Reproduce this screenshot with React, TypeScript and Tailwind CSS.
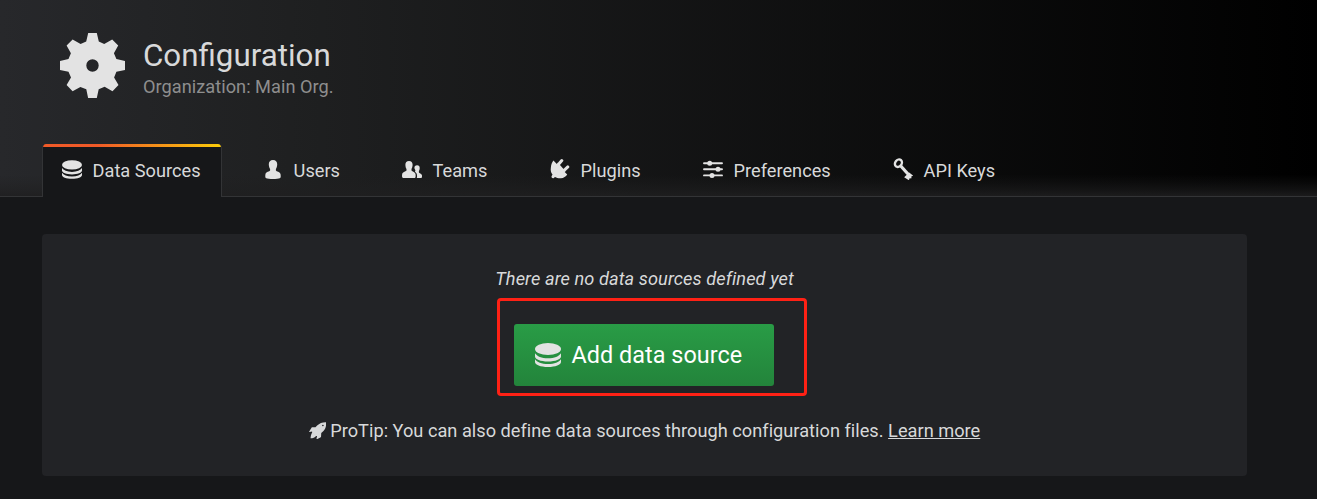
import type { ReactNode } from "react";

type IconProps = { className?: string };

function GearIcon({ className }: IconProps) {
  return (
    <svg viewBox="0 0 65 65" className={className} fill="currentColor">
      <path
        fillRule="evenodd"
        d="M28.2 0h8.6l2 8.6 5.4 2.3 8-4.3 6 6-4.3 7.7 2.5 5.8 8.6 2v8.8l-8.6 1.8-2.3 5.9 4.4 7.4-6 6.3-7.9-4.5-5.9 2.5-1.9 8.700h-8.700l-1.800-8.700-5.900-2.400-7.800 4.400-6-6.300 4.400-7.500-2.500-5.800L0 36.900v-8.800l8.500-2 2.400-5.800-4.300-7.700 6-6 8 4.300 5.600-2.300zM32.500 26.300a6.200 6.200 0 1 0 0 12.400 6.200 6.200 0 0 0 0-12.400z"
      />
    </svg>
  );
}

function DatabaseIcon({ className }: IconProps) {
  return (
    <svg viewBox="0 0 26 24" className={className} fill="currentColor">
      <ellipse cx="13" cy="6" rx="13" ry="6" />
      <path d="M0 10.2c2 3 6.5 5 13 5s11-2 13-5v3.2c0 2.8-5.5 5-13 5s-13-2.2-13-5z" />
      <path d="M0 16.3c2 2.8 6.5 4.8 13 4.8s11-2 13-4.8V19c0 2.8-5.5 5-13 5S0 21.800 0 19z" />
    </svg>
  );
}

function UserIcon({ className }: IconProps) {
  return (
    <svg viewBox="0 0 16 19" className={className} fill="currentColor">
      <path d="M8 0c2.800 0 4.300 1.800 4.200 4.600-.1 2.300-.7 3.400-1.300 4.500v1.500c.3.900 4.400 1.300 4.700 4 .2 1.900.3 3-.9 3.700-1.600.9-11.800.9-13.400 0-1.200-.7-1.100-1.800-.9-3.700.3-2.700 4.400-3.100 4.700-4V9.100C4.500 8 3.900 6.900 3.800 4.600 3.700 1.800 5.200 0 8 0z" />
    </svg>
  );
}

function TeamIcon({ className }: IconProps) {
  return (
    <svg viewBox="0 0 20 17" className={className} fill="currentColor">
      <path d="M7 0c2.500 0 3.700 1.600 3.600 4-.1 2-.6 3-1.100 4v1.500c.3.800 3.600 1.400 4 3.500.3 1.600.3 4-1.100 4H1.200C-.2 17-.1 14.600.2 13c.4-2.100 4-2.700 4.300-3.500V8c-.6-1-1-2-1.100-4C3.300 1.600 4.500 0 7 0z" />
      <path d="M15.100 4.200c1.800 0 2.700 1.200 2.600 3-.1 1.500-.4 2.200-.8 2.900v1.300c.2.700 2.700 1 3 2.700.2 1.300.2 2.900-.9 2.900h-4.200c.4-1.500.3-3.400-.2-4.600-.4-.8-1.200-1.400-1.700-1.700l.4-.6v-1.200c-.5-.7-.8-1.400-.9-2 0-1.700.9-2.700 2.700-2.700z" />
    </svg>
  );
}

function PlugIcon({ className }: IconProps) {
  return (
    <svg viewBox="0 0 20 20" className={className} fill="currentColor">
      <path d="M3.400 1.600 17.200 15.500c-1.300 2.200-3.600 3.500-6.200 3.800-2.200.2-4.400-.4-6-1.400l-1.200 1c-1.200.9-3-.8-2.100-2l.8-1.400C.8 13.700.4 11.300.9 8.300c.3-2.600 1.100-4.900 2.500-6.700z" />
      <path d="M7 3.600 9.500 5.500 14 10.500 15.500 13 10 11z" />
      <path d="m8.200 5.800 3.600-4.200M13.600 11.800l4.200-3.900" fill="none" stroke="currentColor" strokeWidth="3" strokeLinecap="round" />
    </svg>
  );
}

function SlidersIcon({ className }: IconProps) {
  return (
    <svg viewBox="0 0 20 19" className={className} fill="currentColor">
      <path d="M1 3.200h18M1 9.300h18M1 15.400h18" stroke="currentColor" strokeWidth="1.900" strokeLinecap="round" />
      <circle cx="6.700" cy="3.200" r="2.500" />
      <circle cx="15" cy="9.300" r="2.500" />
      <circle cx="9" cy="15.400" r="2.500" />
    </svg>
  );
}

function KeyIcon({ className }: IconProps) {
  return (
    <svg viewBox="0 0 20 22" className={className} fill="none" stroke="currentColor">
      <ellipse cx="5.400" cy="5.200" rx="3.200" ry="4" transform="rotate(38 5.400 5.200)" strokeWidth="2.400" />
      <path d="m7.800 8 8.300 9.200" strokeWidth="3.200" />
      <path d="m12.600 19.200 3.600-3.600 2.300 1.800-1.200.5.200 1.600-1.800.1-.3 1.300z" fill="currentColor" strokeWidth="1.800" />
    </svg>
  );
}

function RocketIcon({ className }: IconProps) {
  return (
    <svg viewBox="0 0 17 17" className={className} fill="currentColor">
      <path
        fillRule="evenodd"
        d="M16.600.2c.3 3.800-.5 6.700-2.800 8.900l-1.900 1.700-.2 3.500c0 .2-.1.300-.3.400l-3.500 2c-.4.200-.7-.1-.6-.5l.5-2.700H6.100L3 10.400V9.300l-2.400.5c-.4.100-.6-.3-.4-.6l2.400-3.900c.1-.2.300-.2.500-.2l3.200-.1 1.600-1.600C10.200 1.300 13 .1 16.600.2zM13.500 2.600a.8.8 0 1 0 0 1.600.8.8 0 0 0 0-1.600z"
      />
      <path d="M3.400 10.200l3.400 3.300c-.9 1.600-3.100 2.200-5.300 2.400.2-2.200.5-4.800 1.900-5.700z" />
    </svg>
  );
}

function Tab({ icon, label, className }: { icon: ReactNode; label: string; className: string }) {
  return (
    <a href="#" className={`flex h-[53px] shrink-0 items-center ${className}`}>
      <span className="mr-[10.6px] flex w-5 shrink-0 justify-center text-[#e3e3e3]">{icon}</span>
      <span className="whitespace-nowrap">{label}</span>
    </a>
  );
}

export default function App() {
  return (
    <div className="h-[499px] w-[1317px] overflow-hidden bg-[#161719] font-[Roboto,sans-serif] text-[18.2px] leading-[27px] text-[#d8d9da]">
      <header className="flex h-[197px] flex-col justify-between border-b border-[#333436] bg-[linear-gradient(0deg,#1f1f20e0_0%,#1f1f2090_3%,#1f1f2040_7%,#1f1f2000_11%),linear-gradient(90deg,#27282b,#1f2021_22%,black)]">
        <div className="flex pt-[33px] pl-[60px]">
          <GearIcon className="size-[65px] text-[#e3e3e3]" />
          <div className="pt-1 pl-[18px]">
            <h1 className="text-[31.3px] leading-[37px]">Configuration</h1>
            <p className="leading-[26px] tracking-[0.03px] text-[#8e8e8e]">Organization: Main Org.</p>
          </div>
        </div>
        <nav className="-mb-px flex pl-[42px]">
          <div className="mr-[41px] w-[180px] overflow-hidden rounded-t-[4px] border-x border-[#333436] bg-[#161719]">
            <div className="h-[3px] bg-[linear-gradient(90deg,#f05a28_30%,#fbca0a_99%)]" />
            <Tab className="-mt-[3px] pl-[19px]" icon={<DatabaseIcon className="mb-[3px] h-[19px] w-5" />} label="Data Sources" />
          </div>
          <Tab className="w-[139px]" icon={<UserIcon className="mb-[3px] h-[19px] w-4" />} label="Users" />
          <Tab className="w-[148px]" icon={<TeamIcon className="mb-[2px] h-[17px] w-5" />} label="Teams" />
          <Tab className="w-[153px]" icon={<PlugIcon className="mb-[3px] size-5" />} label="Plugins" />
          <Tab className="w-[190px]" icon={<SlidersIcon className="mb-[3px] h-[19px] w-5" />} label="Preferences" />
          <Tab className="w-[110px]" icon={<KeyIcon className="mb-[3px] h-[22px] w-5" />} label="API Keys" />
        </nav>
      </header>
      <main className="mt-[37px] ml-[42px] flex h-[242px] w-[1205px] flex-col items-center rounded-[4px] bg-[#222326]">
        <p className="mt-[31px] tracking-[0.08px] italic">There are no data sources defined yet</p>
        <div className="mt-[6px] ml-[15px] h-[98px] w-[310px] rounded-[4px] border-3 border-[#ff2115] pt-[23px] pl-[14px]">
          <button className="flex h-[62px] w-[260px] items-center rounded-[3px] bg-linear-to-b from-[#299c46] to-[#23843b] pl-[21px] text-[23.4px] tracking-[0.03px] text-white">
            <DatabaseIcon className="mr-[10.5px] h-6 w-[26px] text-[#e3e3e3]" />
            <span className="whitespace-nowrap">Add data source</span>
          </button>
        </div>
        <p className="mt-[21px] flex items-center tracking-[0.016px] whitespace-nowrap">
          <RocketIcon className="mr-1 size-[17.5px]" />
          <span>
            ProTip: You can also define data sources through configuration files.{" "}
            <a href="#" className="underline">Learn more</a>
          </span>
        </p>
      </main>
    </div>
  );
}
